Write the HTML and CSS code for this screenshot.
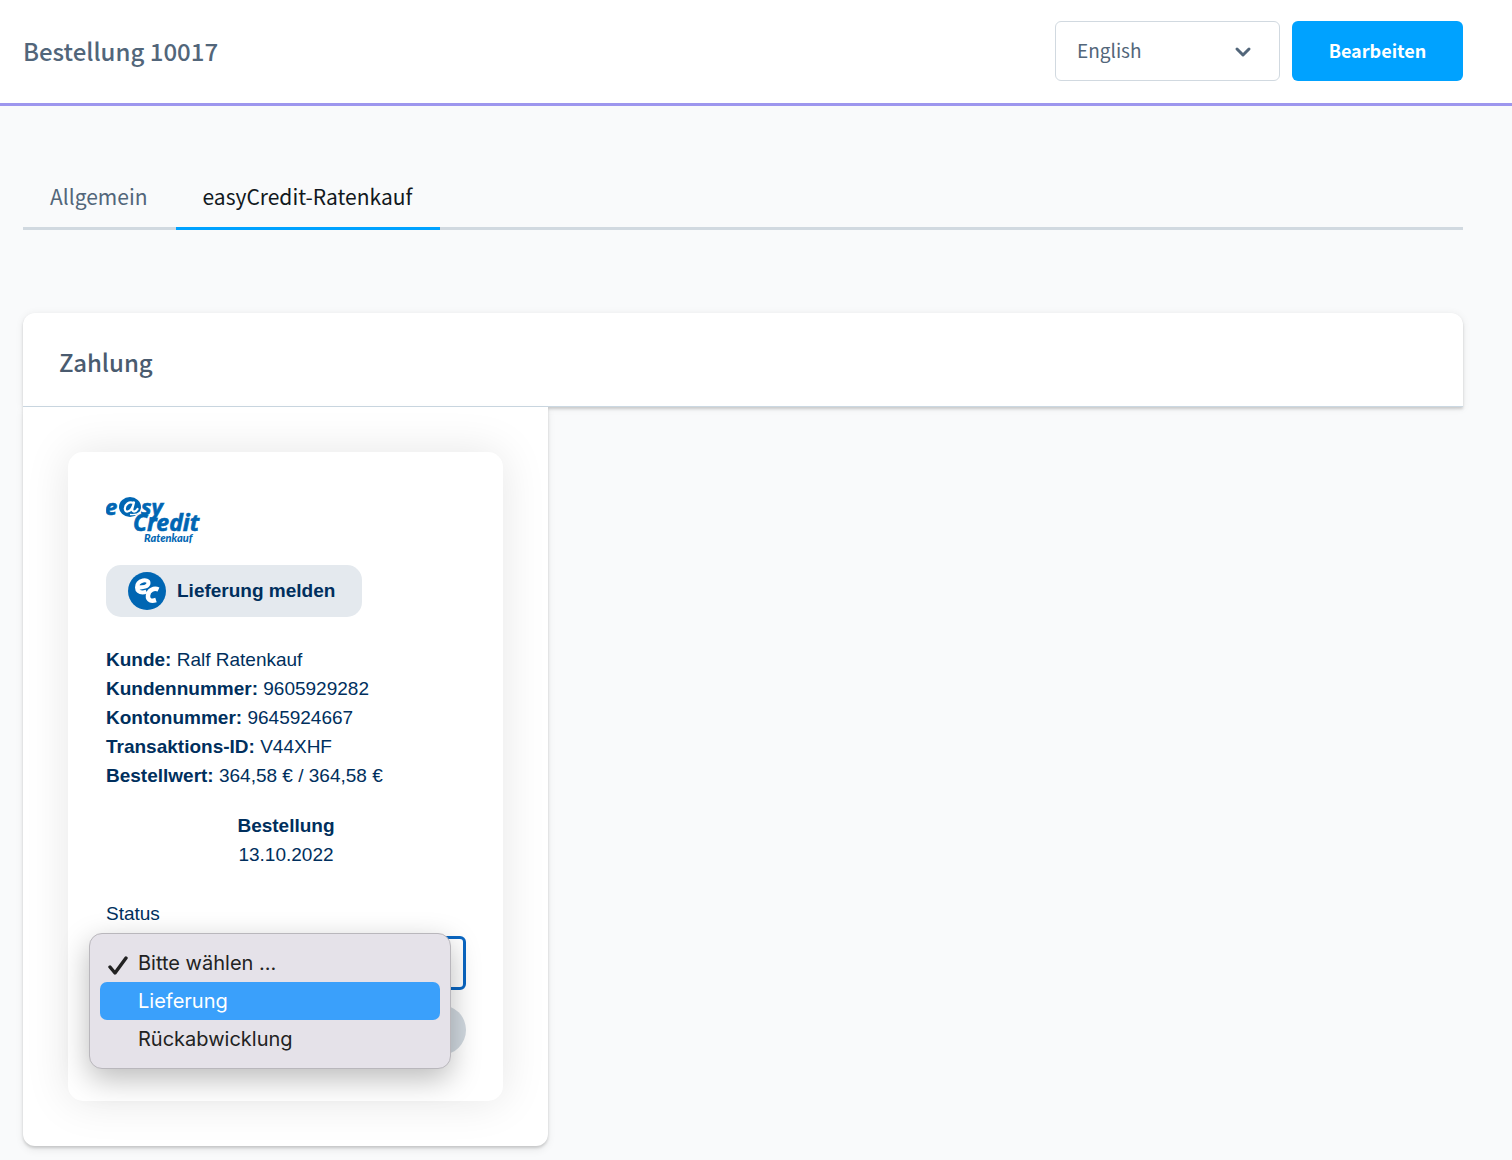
FILE: index.html
```html
<!DOCTYPE html>
<html lang="de">
<head>
<meta charset="utf-8">
<meta name="viewport" content="width=device-width, initial-scale=1">
<title>Bestellung 10017</title>
<link rel="stylesheet" href="styles.css">
</head>
<body>
<header class="page-header">
  <h1 class="page-title">Bestellung 10017</h1>
  <div class="page-actions">
    <div class="language">
      <select class="language-select" aria-label="Sprache">
        <option>English</option>
      </select>
      <svg class="language-arrow" width="18" height="12" viewBox="0 0 18 12" aria-hidden="true"><path d="M3 3l6 6 6-6" fill="none" stroke="#52667a" stroke-width="3" stroke-linecap="round" stroke-linejoin="round"/></svg>
    </div>
    <button class="btn-primary" type="button">Bearbeiten</button>
  </div>
</header>
<main class="content">
  <nav class="tabs">
    <a class="tab" href="#allgemein">Allgemein</a>
    <a class="tab tab-active" href="#easycredit" aria-current="page">easyCredit-Ratenkauf</a>
  </nav>
  <section class="card">
    <div class="card-header"><h2 class="card-title">Zahlung</h2></div>
    <div class="card-body">
      <div class="ec-box">
        <svg class="ec-logo" width="100" height="60" viewBox="0 -8 100 60" role="img" aria-label="easyCredit Ratenkauf">
          <g fill="#0066b3" font-family="Noto Sans, sans-serif" font-weight="700" font-style="italic">
            <g stroke="#0066b3" stroke-width="0.600">
              <text x="-1" y="18" font-size="22">e</text>
              <text x="35" y="18" font-size="22">sy</text>
              <text x="27" y="34" font-size="23">Credit</text>
            </g>
            <ellipse cx="24" cy="10" rx="11" ry="10"/>
            <text x="38" y="45" font-family="Lato, sans-serif" font-weight="900" font-size="11">Ratenkauf</text>
          </g>
          <path d="M27.500 6C23 4 19 7.500 18.800 11.500C18.800 16 24 15.500 26.500 10L28 5.500L26.300 12C26 15.500 29.500 15.500 31.500 12" fill="none" stroke="#fff" stroke-width="2.200" stroke-linecap="round" stroke-linejoin="round"/>
          <path d="M24 17.500C28 18 32 17 34.500 15" fill="none" stroke="#fff" stroke-width="1.300"/>
        </svg>
        <button class="ec-report" type="button">
          <svg width="38" height="38" viewBox="0 0 38 38" aria-hidden="true">
            <circle cx="19" cy="19" r="19" fill="#0066b3"/>
            <path d="M9.500 15.500C15 15.500 20.500 14.500 20.500 11C20.500 8.500 17.500 8 15 8.500C11 9.500 9 12.500 9 15.500C9 19 11.500 20.500 14.500 20.500C16 20.500 17.500 20 18.500 19.500" fill="none" stroke="#fff" stroke-width="4"/>
            <path d="M30.500 17.500C26 15.500 20.500 18 20 23.500C19.500 28.500 23.500 29.500 28 28" fill="none" stroke="#fff" stroke-width="4.500"/>
          </svg>
          Lieferung melden
        </button>
        <ul class="ec-facts">
          <li><strong>Kunde:</strong> Ralf Ratenkauf</li>
          <li><strong>Kundennummer:</strong> 9605929282</li>
          <li><strong>Kontonummer:</strong> 9645924667</li>
          <li><strong>Transaktions-ID:</strong> V44XHF</li>
          <li><strong>Bestellwert:</strong> 364,58 € / 364,58 €</li>
        </ul>
        <p class="ec-order"><strong>Bestellung</strong><br>13.10.2022</p>
        <form class="ec-form">
          <label for="status">Status</label>
          <div class="status-field">
            <select class="status-select" id="status"></select>
            <ul class="menu" role="listbox" aria-label="Status">
              <li class="menu-item" role="option" aria-selected="true"><svg class="menu-check" width="22" height="20" viewBox="0 0 22 20" aria-hidden="true"><path d="M3 12l5 6L19 3" fill="none" stroke="#222" stroke-width="3.400" stroke-linecap="round" stroke-linejoin="round"/></svg>Bitte wählen ...</li>
              <li class="menu-item menu-item-active" role="option" aria-selected="false">Lieferung</li>
              <li class="menu-item" role="option" aria-selected="false">Rückabwicklung</li>
            </ul>
          </div>
          <button class="ec-submit" type="button" aria-label="Absenden"></button>
        </form>
      </div>
    </div>
  </section>
</main>
</body>
</html>
```
FILE: styles.css
```css
* { box-sizing: border-box; }
body {
  margin: 0;
  background: #f9fafb;
  color: #52667a;
  font-family: "Noto Sans CJK SC", "Noto Sans", sans-serif;
}
h1, h2, p, ul { margin: 0; padding: 0; }
ul { list-style: none; }
button, select { font-family: inherit; }

.page-header {
  display: flex;
  align-items: center;
  justify-content: space-between;
  padding: 21px 49px 22px 23px;
  background: #fff;
  border-bottom: 3px solid #9d96ee;
}
.page-title, .card-title { font-size: 24px; line-height: 36px; font-weight: 500; }
.page-actions { display: flex; gap: 12px; }
.language { position: relative; }
.language-select {
  appearance: none;
  display: block;
  width: 225px;
  height: 60px;
  padding: 0 21px 3px;
  border: 1px solid #d1d9e0;
  border-radius: 6px;
  background: #fff;
  color: #52667a;
  font-size: 19px;
}
.language-arrow { position: absolute; right: 28px; top: 25px; pointer-events: none; }
.btn-primary {
  min-width: 171px;
  height: 60px;
  padding: 0 24px 3px;
  border: 0;
  border-radius: 6px;
  background: #00a2ff;
  color: #fff;
  font-size: 18px;
  font-weight: 700;
}

.content { padding: 60px 49px 14px 23px; }
.tabs { display: flex; border-bottom: 3px solid #d1d9e0; }
.tab {
  margin-bottom: -3px;
  padding: 13px 28px 14px 27px;
  border-bottom: 3px solid transparent;
  color: #52667a;
  font-size: 21px;
  line-height: 34px;
  text-decoration: none;
}
.tab-active { border-color: #00a2ff; color: #111820; }

.card { margin-top: 83px; }
.card-header {
  padding: 31px 36px 26px;
  background: #fff;
  border-bottom: 1px solid #cbd8e2;
  border-radius: 12px 12px 0 0;
  box-shadow: 0 2px 3px rgba(0, 0, 0, .16), 0 1px 8px rgba(0, 0, 0, .07);
}
.card-title { color: #4a5b6f; }
.card-body {
  position: relative;
  width: 525px;
  padding: 45px;
  background: #fff;
  border-radius: 0 0 12px 12px;
  box-shadow: 0 2px 3px rgba(0, 0, 0, .16), 0 4px 8px rgba(0, 0, 0, .07);
}
.ec-box {
  display: flex;
  flex-direction: column;
  align-items: flex-start;
  padding: 37px 37px 46px 38px;
  border-radius: 15px;
  background: #fff;
  box-shadow: 0 0 45px rgba(0, 0, 0, .1);
  color: #002f5d;
  font-family: "Liberation Sans", Arial, sans-serif;
  font-size: 19px;
  line-height: 29px;
}
.ec-report {
  display: flex;
  align-items: center;
  gap: 11px;
  height: 52px;
  margin: 16px 0 28px;
  padding: 0 27px 0 22px;
  border: 0;
  border-radius: 15px;
  background: #e4e9ee;
  color: #002f5d;
  font-size: 19px;
  font-weight: 700;
}
.ec-order { align-self: center; margin: 21px 0 30px; text-align: center; }
.ec-form { display: flex; flex-direction: column; align-self: stretch; }
.status-field { position: relative; margin-top: 8px; }
.status-select {
  appearance: none;
  display: block;
  width: 100%;
  height: 54px;
  border: 3px solid #0a66c2;
  border-radius: 6px;
  background: #fff;
}
.menu {
  position: absolute;
  left: -17px;
  right: 15px;
  top: -3px;
  padding: 10px;
  border: 1px solid #b9b7bc;
  border-radius: 13px;
  background: #e5e2e9;
  box-shadow: 0 10px 30px rgba(0, 0, 0, .27);
  color: #222;
  font-family: Inter, sans-serif;
  font-size: 20px;
}
.menu-item {
  position: relative;
  padding: 0 38px;
  line-height: 38px;
  border-radius: 7px;
}
.menu-item-active { background: #3aa0fb; color: #fff; }
.menu-check { position: absolute; left: 7px; top: 11px; }
.ec-submit {
  height: 50px;
  margin-top: 15px;
  border: 0;
  border-radius: 25px;
  background: #d1d9e0;
}
```
